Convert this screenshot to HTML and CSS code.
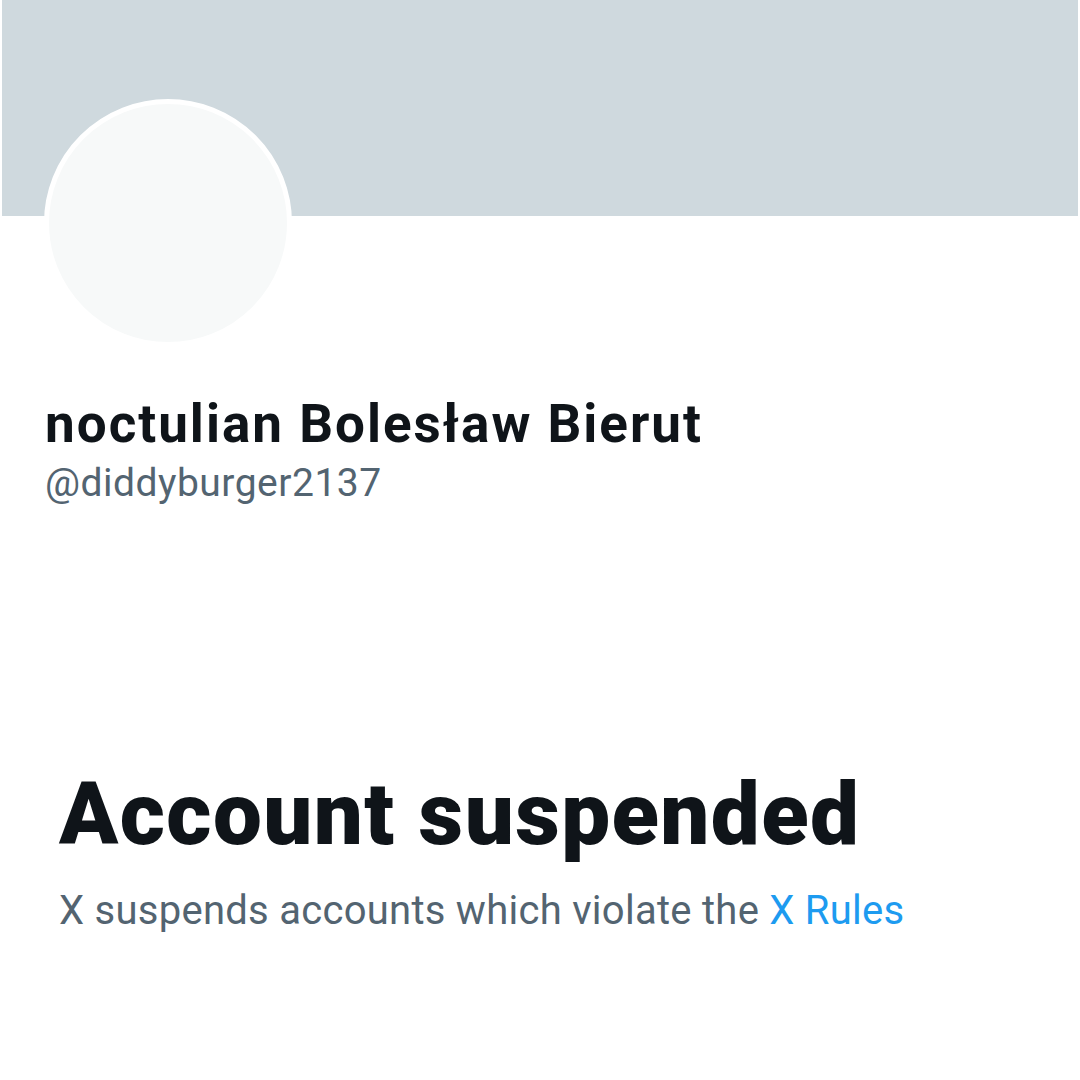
FILE: index.html
```html
<!DOCTYPE html>
<html lang="en">
<head>
<meta charset="utf-8">
<title>Account suspended</title>
<link rel="stylesheet" href="styles.css">
</head>
<body>
<div class="page">
  <div class="banner"></div>
  <div class="avatar"></div>
  <div class="identity">
    <div class="name">noctulian Bolesław Bierut</div>
    <div class="handle">@diddyburger2137</div>
  </div>
  <div class="notice">
    <h1 class="title">Account suspended</h1>
    <p class="desc">X suspends accounts which violate the <a class="link" href="#">X Rules</a></p>
  </div>
</div>
</body>
</html>
```
FILE: styles.css
```css
html, body {
  margin: 0;
  padding: 0;
  background: #ffffff;
}
body {
  width: 1080px;
  height: 1080px;
  overflow: hidden;
  font-family: "Roboto", "Liberation Sans", sans-serif;
}
.page {
  display: flex;
  flex-direction: column;
}
.banner {
  height: 216px;
  margin: 0 2px;
  background: #cfd9de;
}
.avatar {
  width: 238px;
  height: 238px;
  margin-top: -117px;
  margin-left: 44px;
  border: 5px solid #ffffff;
  border-radius: 50%;
  background: #f7f9f9;
}
.identity {
  margin-top: 47px;
  margin-left: 45px;
  display: flex;
  flex-direction: column;
}
.name {
  font-size: 53px;
  font-weight: 700;
  letter-spacing: 2px;
  color: #0f1419;
  line-height: 60px;
}
.handle {
  margin-top: 4px;
  font-size: 39px;
  letter-spacing: 0.5px;
  color: #536471;
  line-height: 50px;
}
.notice {
  margin-top: 256px;
  margin-left: 59px;
}
.title {
  margin: 0;
  font-size: 87px;
  font-weight: 900;
  letter-spacing: 1.4px;
  color: #0f1419;
  line-height: 100px;
}
.desc {
  margin: 22px 0 0 0;
  font-size: 40px;
  letter-spacing: 0.27px;
  color: #536471;
  line-height: 50px;
}
.link {
  color: #1d9bf0;
  text-decoration: none;
}
```
